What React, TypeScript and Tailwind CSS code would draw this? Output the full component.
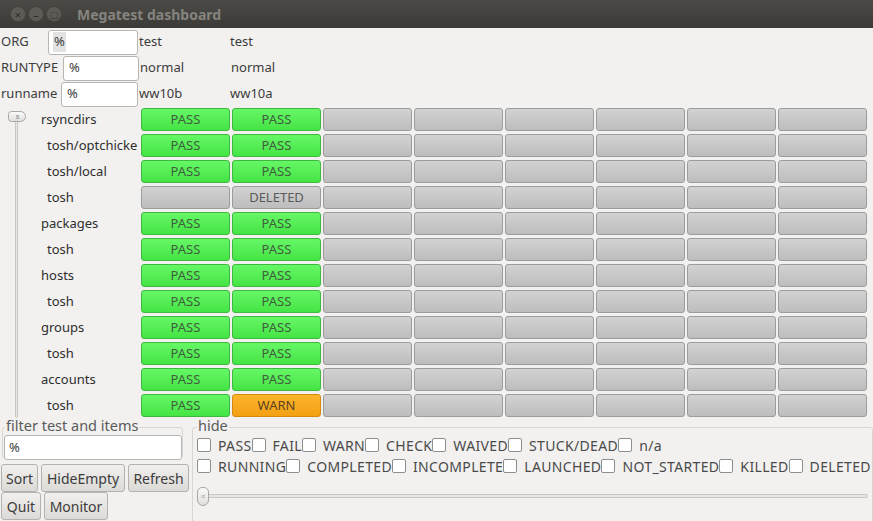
import React from "react";

type Cell = "PASS" | "WARN" | "DELETED" | "EMPTY";

const rows: { name: string; child: boolean; cells: Cell[] }[] = [
  { name: "rsyncdirs", child: false, cells: ["PASS", "PASS"] },
  { name: "tosh/optchicke", child: true, cells: ["PASS", "PASS"] },
  { name: "tosh/local", child: true, cells: ["PASS", "PASS"] },
  { name: "tosh", child: true, cells: ["EMPTY", "DELETED"] },
  { name: "packages", child: false, cells: ["PASS", "PASS"] },
  { name: "tosh", child: true, cells: ["PASS", "PASS"] },
  { name: "hosts", child: false, cells: ["PASS", "PASS"] },
  { name: "tosh", child: true, cells: ["PASS", "PASS"] },
  { name: "groups", child: false, cells: ["PASS", "PASS"] },
  { name: "tosh", child: true, cells: ["PASS", "PASS"] },
  { name: "accounts", child: false, cells: ["PASS", "PASS"] },
  { name: "tosh", child: true, cells: ["PASS", "WARN"] },
];

const hideRow1 = ["PASS", "FAIL", "WARN", "CHECK", "WAIVED", "STUCK/DEAD", "n/a"];
const hideRow2 = ["RUNNING", "COMPLETED", "INCOMPLETE", "LAUNCHED", "NOT_STARTED", "KILLED", "DELETED"];

const font = { fontFamily: "'Noto Sans', 'Open Sans', sans-serif" };

function StatusButton({ kind }: { kind: Cell }) {
  if (kind === "PASS")
    return (
      <div className="flex h-[23px] items-center justify-center rounded-[3px] border border-[#3fb83f] bg-gradient-to-b from-[#66f766] to-[#44e444] text-[13px] text-[#3f5f3f]">
        PASS
      </div>
    );
  if (kind === "WARN")
    return (
      <div className="flex h-[23px] items-center justify-center rounded-[3px] border border-[#d48a10] bg-gradient-to-b from-[#fdb52c] to-[#f3a012] text-[13px] text-[#5a4420]">
        WARN
      </div>
    );
  return (
    <div className="flex h-[23px] items-center justify-center rounded-[3px] border border-[#9c9c9c] bg-gradient-to-b from-[#d2d2d2] to-[#bdbdbd] text-[13px] text-[#5a5a5a]">
      {kind === "DELETED" ? "DELETED" : ""}
    </div>
  );
}

function TextBox({ w, selected }: { w: string; selected?: boolean }) {
  return (
    <div className={`${w} flex h-[25px] items-center rounded-[3px] border border-[#b8b6b2] bg-white px-[4px] text-[13px] text-[#3c3c3c]`}>
      <span className={selected ? "bg-[#e2e2e2] px-[1px]" : "px-[1px]"}>%</span>
    </div>
  );
}

function CheckBox() {
  return <span className="inline-block h-[14px] w-[14px] shrink-0 rounded-[2px] border border-[#8e8e8c] bg-white" />;
}

function GtkButton({ label, w }: { label: string; w: string }) {
  return (
    <div className={`${w} flex h-[28px] items-center justify-center rounded-[3px] border border-[#b4b2ae] bg-gradient-to-b from-[#f1f0ee] to-[#dcdad6] text-[14px] text-[#3c3c3c]`}>
      {label}
    </div>
  );
}

export default function App() {
  return (
    <div className="h-[521px] w-[873px] overflow-hidden bg-[#f2f1f0] text-[#3c3c3c]" style={font}>
      {/* title bar */}
      <div className="flex h-[28px] items-center bg-gradient-to-b from-[#4b4a46] to-[#3b3a36] pl-[10px]">
        <div className="flex gap-[2px]">
          {["×", "–", "□"].map((g) => (
            <span
              key={g}
              className="flex h-[16px] w-[16px] items-center justify-center rounded-full border border-[#46453f] bg-[#5c5b56] text-[11px] leading-none text-[#2e2d2a]"
            >
              {g}
            </span>
          ))}
        </div>
        <span className="ml-[15px] text-[14px] font-bold text-[#85847f]">Megatest dashboard</span>
      </div>

      {/* run selectors */}
      <div className="flex flex-col pt-[1px] text-[13px]">
        {[
          { label: "ORG", pad: "w-[48px]", box: "w-[90px]", a: "test", b: "test", sel: true },
          { label: "RUNTYPE", pad: "w-[63px]", box: "w-[76px]", a: "normal", b: "normal" },
          { label: "runname", pad: "w-[61px]", box: "w-[77px]", a: "ww10b", b: "ww10a" },
        ].map((r) => (
          <div key={r.label} className="flex h-[26px] items-center">
            <span className={`${r.pad} shrink-0 pl-[1px]`}>{r.label}</span>
            <TextBox w={r.box} selected={r.sel} />
            <span className="ml-[1px] w-[91px]">{r.a}</span>
            <span>{r.b}</span>
          </div>
        ))}
      </div>

      {/* matrix */}
      <div className="mt-[1px] flex">
        <div className="relative w-[28px] shrink-0">
          <div className="absolute left-[15px] top-[6px] h-[304px] w-[3px] rounded-sm border border-[#c9c7c3] bg-[#e9e8e6]" />
          <div className="absolute left-[8px] top-[3px] flex h-[11px] w-[18px] items-center justify-center rounded-l-[5px] rounded-r-[8px] border border-[#a9a7a3] bg-gradient-to-b from-[#fafafa] to-[#e1dfdc]">
            <span className="text-[6px] leading-none tracking-[-1px] text-[#999]">III</span>
          </div>
        </div>
        <div className="grid grid-cols-[111px_repeat(8,89px)] gap-x-[2px] gap-y-[3px]">
          {rows.map((r, i) => (
            <React.Fragment key={i}>
              <div className={`flex h-[23px] items-center text-[13px] text-[#2e2e2e] ${r.child ? "pl-[19px]" : "pl-[13px]"}`}>
                <span className="whitespace-nowrap">{r.name}</span>
              </div>
              {Array.from({ length: 8 }).map((_, c) => (
                <StatusButton key={c} kind={r.cells[c] ?? "EMPTY"} />
              ))}
            </React.Fragment>
          ))}
        </div>
      </div>

      {/* bottom controls */}
      <div className="mt-[3px] flex">
        <div className="flex w-[192px] shrink-0 flex-col">
          <div className="relative ml-[2px] mt-[7px] h-[31px] w-[181px] rounded-[3px] border border-[#d8d6d2]">
            <span className="absolute -top-[10px] left-[2px] bg-[#f2f1f0] px-[1px] text-[14.5px] leading-none text-[#5a5a5a]">
              filter test and items
            </span>
            <div className="mt-[7px] ml-[1px]">
              <div className="flex h-[25px] w-[178px] items-center rounded-[3px] border border-[#b8b6b2] bg-white px-[4px] text-[13px]">
                %
              </div>
            </div>
          </div>
          <div className="ml-[1px] mt-[6px] flex gap-[3px]">
            <GtkButton label="Sort" w="w-[37px]" />
            <GtkButton label="HideEmpty" w="w-[84px]" />
            <GtkButton label="Refresh" w="w-[61px]" />
          </div>
          <div className="ml-[1px] flex gap-[3px]">
            <GtkButton label="Quit" w="w-[40px]" />
            <GtkButton label="Monitor" w="w-[64px]" />
          </div>
        </div>

        <div className="relative mt-[7px] h-[100px] flex-1 rounded-[3px] border border-[#d8d6d2]">
          <span className="absolute -top-[10px] left-[4px] bg-[#f2f1f0] px-[1px] text-[14.5px] leading-none text-[#5a5a5a]">
            hide
          </span>
          <div className="ml-[4px] mt-[10px] flex flex-col gap-[7px] text-[14px] tracking-[0.35px] text-[#4a4a4a]">
            {[hideRow1, hideRow2].map((row, ri) => (
              <div key={ri} className="flex h-[14px] items-center whitespace-nowrap">
                {row.map((l) => (
                  <React.Fragment key={l}>
                    <CheckBox />
                    <span className="ml-[7px]">{l}</span>
                  </React.Fragment>
                ))}
              </div>
            ))}
          </div>
          <div className="relative ml-[4px] mr-[4px] mt-[14px] h-[20px]">
            <div className="absolute left-0 right-0 top-[7px] h-[4px] rounded-sm border border-[#c9c7c3] bg-[#e6e5e2]" />
            <div className="absolute left-0 top-0 flex h-[19px] w-[12px] items-center justify-center rounded-t-[5px] rounded-b-[6px] border border-[#a9a7a3] bg-gradient-to-b from-[#fafafa] to-[#e1dfdc]">
              <span className="text-[7px] leading-none text-[#999]">≡</span>
            </div>
          </div>
        </div>
      </div>
    </div>
  );
}
